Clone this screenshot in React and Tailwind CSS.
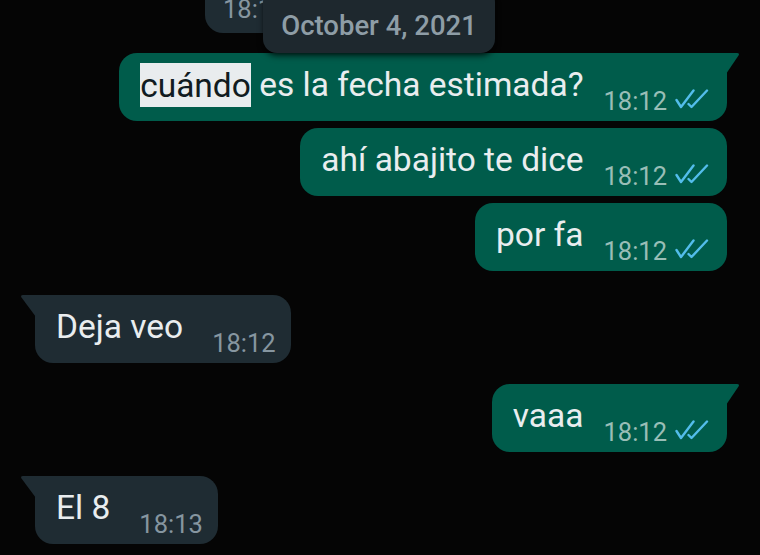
const messages = [
  { id: 1, out: true, tail: true, time: '18:12', highlight: 'cuándo', text: ' es la fecha estimada?', gap: 'mt-0' },
  { id: 2, out: true, time: '18:12', text: 'ahí abajito te dice', gap: 'mt-[7px]' },
  { id: 3, out: true, time: '18:12', text: 'por fa', gap: 'mt-[7px]' },
  { id: 4, out: false, tail: true, time: '18:12', text: 'Deja veo', gap: 'mt-[24px]' },
  { id: 5, out: true, tail: true, time: '18:12', text: 'vaaa', gap: 'mt-[21px]' },
  { id: 6, out: false, tail: true, time: '18:13', text: 'El 8', gap: 'mt-[24px]' },
]

function DoubleCheck() {
  return (
    <svg width="34" height="20" viewBox="0 0 34 20" fill="none" className="self-end mb-[7px]">
      <path d="M1.5 11 L6 18 L18.5 1.5" stroke="#53bdeb" strokeWidth="2.4" strokeLinecap="round" strokeLinejoin="round" />
      <path d="M13.5 15 L16.5 18 L32 1.5" stroke="#53bdeb" strokeWidth="2.4" strokeLinecap="round" strokeLinejoin="round" />
    </svg>
  )
}

function Bubble({ m }) {
  const bg = m.out ? 'bg-[#005c4b]' : 'bg-[#1f2c33]'
  const corners = m.tail ? (m.out ? 'rounded-[18px] rounded-tr-none' : 'rounded-[18px] rounded-tl-none') : 'rounded-[18px]'
  return (
    <div className={`flex ${m.out ? 'justify-end pr-[33px]' : 'justify-start pl-[35px]'} ${m.gap}`}>
      <div className={`relative flex items-start ${bg} ${corners} pl-[21px] pt-[12px] pb-[5px] ${m.out ? 'pr-[18px]' : 'pr-[15px]'}`}>
        {m.tail && m.out && (
          <svg width="14" height="21" viewBox="0 0 14 21" className="absolute top-0 -right-[13px]">
            <path d="M0 0 H11 Q14 0 12.5 2.5 L0 21 Z" fill="#005c4b" />
          </svg>
        )}
        {m.tail && !m.out && (
          <svg width="16" height="22" viewBox="0 0 16 22" className="absolute top-0 -left-[15px]">
            <path d="M16 0 H3 Q0 0 1.5 2.5 L16 22 Z" fill="#1f2c33" />
          </svg>
        )}
        <span className="text-[33.5px] leading-[40px] text-[#e9edef] whitespace-nowrap">
          {m.highlight && <span className="bg-[#e9ecee] text-[#111b21] py-[2.5px]">{m.highlight}</span>}
          {m.text}
        </span>
        <div className={`flex items-center mt-[21px] ${m.out ? 'ml-[20px]' : 'ml-[29px]'}`}>
          <span className={`text-[25.5px] leading-[30px] ${m.out ? 'text-[#99beb7]' : 'text-[#8696a0]'}`}>{m.time}</span>
          {m.out && <span className="ml-[8px] flex self-stretch"><DoubleCheck /></span>}
        </div>
      </div>
    </div>
  )
}

export default function App() {
  return (
    <div className="relative w-[760px] h-[555px] overflow-hidden bg-[#050505]" style={{ fontFamily: 'Roboto, "Noto Sans", sans-serif' }}>
      <div className="absolute left-[205px] -top-[35px] w-[250px] h-[68px] rounded-[18px] bg-[#1f2c33] pl-[18px] pt-[29px]">
        <span className="text-[25.5px] leading-[30px] text-[#8696a0]">18:12</span>
      </div>
      <div className="absolute left-[263px] -top-[12px] w-[232px] h-[65px] rounded-[14px] bg-[#1e282e] shadow-md shadow-black/60 pt-[22px] text-center z-10">
        <span className="text-[27.5px] leading-[32px] font-medium text-[#8e9da6]">October 4, 2021</span>
      </div>
      <div className="flex flex-col pt-[53px]">
        {messages.map((m) => (
          <Bubble key={m.id} m={m} />
        ))}
      </div>
    </div>
  )
}
